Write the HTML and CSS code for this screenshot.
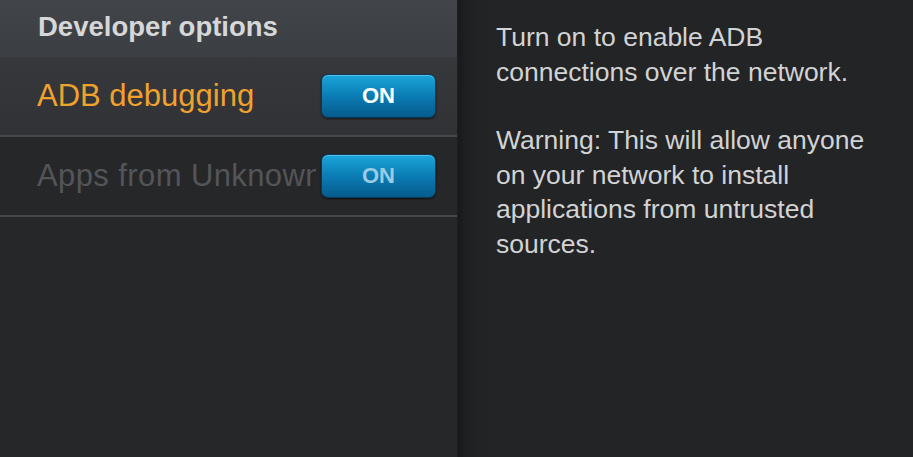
FILE: index.html
```html
<!DOCTYPE html>
<html>
<head>
<meta charset="utf-8">
<link rel="stylesheet" href="styles.css">
</head>
<body>
<div class="screen">
  <div class="left">
    <div class="header">Developer options</div>
    <div class="row active">
      <div class="label">ADB debugging</div>
      <div class="toggle">ON</div>
    </div>
    <div class="row disabled">
      <div class="label">Apps from Unknown Sources</div>
      <div class="toggle">ON</div>
    </div>
  </div>
  <div class="right">
    <p>Turn on to enable ADB connections over the network.</p>
    <p>Warning: This will allow anyone on your network to install applications from untrusted sources.</p>
  </div>
</div>
</body>
</html>
```
FILE: styles.css
```css
html, body {
  margin: 0;
  padding: 0;
  width: 913px;
  height: 457px;
  overflow: hidden;
  background: #232426;
}
.screen {
  display: flex;
  width: 913px;
  height: 457px;
  font-family: "Liberation Sans", Arial, sans-serif;
}
.left {
  width: 457px;
  flex: none;
  background: #262729;
  display: flex;
  flex-direction: column;
  border-right: 1px solid #1e1f21;
}
.header {
  height: 57px;
  box-sizing: border-box;
  padding: 11px 0 0 38px;
  font-size: 27.5px;
  font-weight: bold;
  color: #d6d7d8;
  background: linear-gradient(#414448, #3b3e42);
}
.row {
  height: 80px;
  box-sizing: border-box;
  display: flex;
  align-items: center;
  padding: 0 21px 0 37px;
  border-bottom: 2px solid #45474b;
}
.row.active {
  background: linear-gradient(#36383b, #303235);
}
.row.disabled {
  background: #262729;
}
.label {
  flex: 1;
  min-width: 0;
  white-space: nowrap;
  overflow: hidden;
  font-size: 31px;
  color: #f0a12e;
  padding-bottom: 1px;
  margin-right: 5px;
}
.row.disabled .label {
  color: #535558;
  letter-spacing: 0.4px;
}
.toggle {
  flex: none;
  width: 115px;
  height: 44px;
  box-sizing: border-box;
  border-radius: 7px;
  border: 1px solid #0a3a58;
  background: linear-gradient(#1aa6db, #0b7cb4 50%, #065b8d);
  box-shadow: inset 0 1px 0 rgba(140, 215, 245, 0.55), 0 1px 2px rgba(0,0,0,0.6);
  display: flex;
  align-items: center;
  justify-content: center;
  font-size: 22px;
  font-weight: bold;
  color: #ffffff;
}
.row.disabled .toggle {
  color: #9ccbe3;
}
.right {
  flex: 1;
  box-sizing: border-box;
  padding: 20px 17px 0 38px;
  background: linear-gradient(90deg, #18191a 0px, #1f2022 8px, #222325 22px, #232426 40px);
  color: #d2d3d4;
  font-size: 26.5px;
  line-height: 34.5px;
}
.right p {
  margin: 0 0 34px 0;
}
```
